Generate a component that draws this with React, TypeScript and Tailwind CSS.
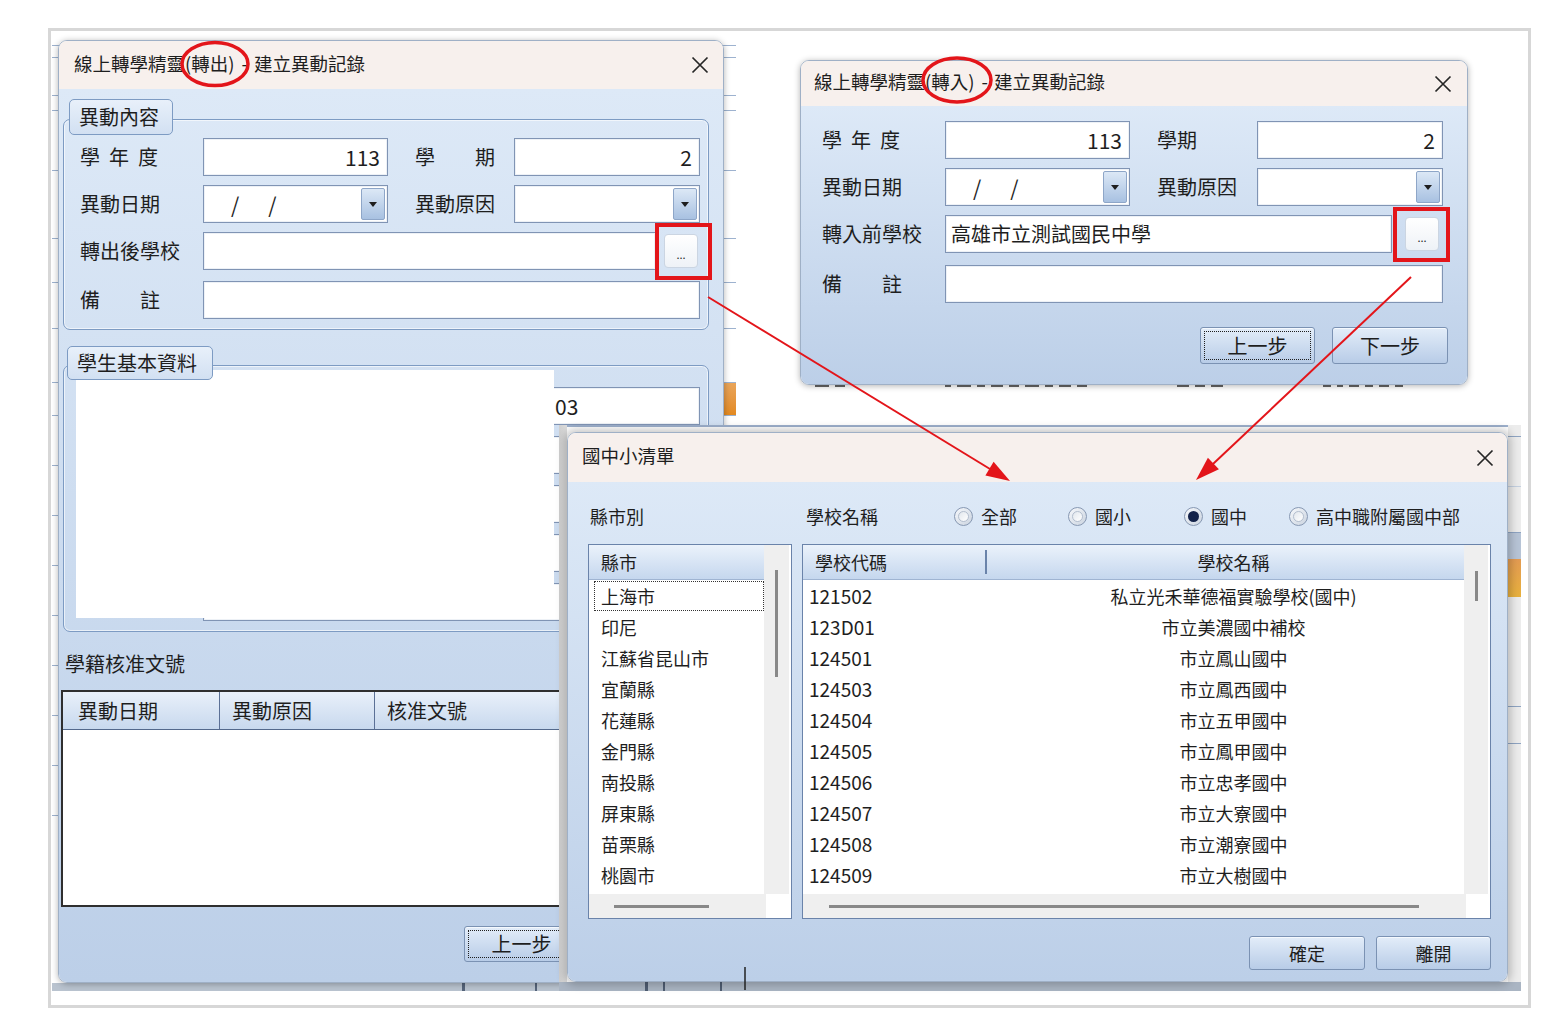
import React from "react";

const cities = ["上海市", "印尼", "江蘇省昆山市", "宜蘭縣", "花蓮縣", "金門縣", "南投縣", "屏東縣", "苗栗縣", "桃園市"];

const schools = [
  ["121502", "私立光禾華德福實驗學校(國中)"],
  ["123D01", "市立美濃國中補校"],
  ["124501", "市立鳳山國中"],
  ["124503", "市立鳳西國中"],
  ["124504", "市立五甲國中"],
  ["124505", "市立鳳甲國中"],
  ["124506", "市立忠孝國中"],
  ["124507", "市立大寮國中"],
  ["124508", "市立潮寮國中"],
  ["124509", "市立大樹國中"],
];

// rows of the app that sits behind the dialogs (only slivers show)
const backRows = [
  { h: 10 }, { h: 12 }, { h: 38 }, { h: 15 }, { h: 60 }, { h: 68 }, { h: 44 }, { h: 46 }, { h: 54 },
  { h: 33, orange: true }, { h: 50 }, { h: 50 }, { h: 50 }, { h: 50 }, { h: 50 }, { h: 50 }, { h: 50 }, { h: 50 },
];

// glyph tops peeking out under the 轉入 dialog: [gap before, width]
const peek = [
  [10, 14], [6, 10], [100, 6], [6, 14], [6, 8], [6, 12], [6, 10], [6, 14], [6, 8], [6, 12], [6, 10],
  [90, 12], [6, 10], [6, 12], [100, 8], [6, 6], [6, 10], [6, 8], [6, 10], [6, 8],
];

function CloseX() {
  return (
    <svg width="20" height="20" viewBox="0 0 20 20" className="shrink-0">
      <path d="M2.5 2.5L17.5 17.5M17.5 2.5L2.5 17.5" stroke="#262626" strokeWidth="1.7" />
    </svg>
  );
}

function Spread({ text, className = "" }: { text: string; className?: string }) {
  return (
    <span className={`flex justify-between ${className}`}>
      {Array.from(text).map((c, i) => (
        <span key={i}>{c}</span>
      ))}
    </span>
  );
}

function Field({ className = "", children }: { className?: string; children?: React.ReactNode }) {
  return (
    <div className={`flex h-full shrink-0 items-center border border-[#8094b4] bg-white shadow-[inset_0_0_0_1px_#edf1f6] ${className}`}>
      {children}
    </div>
  );
}

function DropBtn() {
  return (
    <div className="ml-auto mr-[2px] flex h-[32px] w-[24px] items-center justify-center rounded-[2px] border border-[#8ea6c8] bg-linear-to-b from-[#dce8f6] to-[#a8c1e1]">
      <svg width="8" height="5" viewBox="0 0 8 5">
        <path d="M0 0H8L4 5Z" fill="#1e1e1e" />
      </svg>
    </div>
  );
}

function DateText() {
  return (
    <span className="flex text-[21px] leading-none">
      <span className="ml-[27px]">/</span>
      <span className="ml-[29px]">/</span>
    </span>
  );
}

function DotsBtn({ className = "" }: { className?: string }) {
  return (
    <div className={`flex h-[34px] w-[34px] shrink-0 items-end justify-center rounded-[4px] border border-[#cbd5e2] bg-linear-to-b from-white to-[#eef2f7] pb-[7px] text-[11px] leading-none ${className}`}>
      ...
    </div>
  );
}

function Btn({ label, focus, className = "" }: { label: string; focus?: boolean; className?: string }) {
  return (
    <div className={`relative flex shrink-0 items-center justify-center rounded-[3px] border border-[#7b92b3] bg-linear-to-b from-[#e3edf9] to-[#b8cce7] shadow-[inset_0_1px_0_#f5f9fe] leading-none ${className}`}>
      {focus && <div className="absolute inset-[3px] border border-dotted border-[#1f1f1f]" />}
      <span>{label}</span>
    </div>
  );
}

function Radio({ on }: { on?: boolean }) {
  return (
    <span className="flex h-[19px] w-[19px] shrink-0 items-center justify-center rounded-full border border-[#8798b2] bg-linear-to-br from-[#f6f8fb] to-[#cbd4e0]">
      <span className={`h-[11px] w-[11px] rounded-full ${on ? "bg-[#13224a]" : "border border-[#b3bece] bg-linear-to-br from-[#e2e7ed] to-white"}`} />
    </span>
  );
}

function TitleBar({ children, className }: { children: React.ReactNode; className: string }) {
  return (
    <div className={`flex shrink-0 items-center justify-between bg-[#f7f0ed] ${className}`}>
      <span className="-mt-[4px] flex items-center text-[18.5px] leading-none">{children}</span>
      <CloseX />
    </div>
  );
}

function WizardTitle({ dir }: { dir: string }) {
  return (
    <>
      <span>線上轉學精靈</span>
      <span>({dir})</span>
      <span className="ml-[7px] mr-[6px]">-</span>
      <span>建立異動記錄</span>
    </>
  );
}

function Backdrop({ className, rows }: { className: string; rows: { h: number; orange?: boolean }[] }) {
  return (
    <div className={`absolute flex flex-col overflow-hidden ${className}`}>
      {rows.map((r, i) => (
        <div key={i} className="flex shrink-0 justify-end border-b border-[#9db2cf] bg-white" style={{ height: r.h }}>
          {r.orange && <div className="w-[12px] bg-linear-to-b from-[#e9a55a] to-[#e38a1f]" />}
        </div>
      ))}
      <div className="flex-1 bg-white" />
      <div className="flex h-[8px] shrink-0 gap-[70px] bg-[#b9c3cf] pl-[410px]">
        <div className="w-[3px] bg-[#55647a]" />
        <div className="w-[2px] bg-[#55647a]" />
        <div className="w-[2px] bg-[#55647a]" />
      </div>
    </div>
  );
}

function OutWindow() {
  return (
    <div className="absolute left-[58px] top-[40px] z-10 flex h-[943px] w-[666px] flex-col overflow-hidden rounded-[9px] border border-[#9fb0c6] shadow-[0_1px_6px_rgba(0,0,0,0.3)]">
      <TitleBar className="h-[48px] pl-[15px] pr-[13px]">
        <WizardTitle dir="轉出" />
      </TitleBar>
      <div className="flex flex-1 flex-col bg-linear-to-b from-[#dde9f7] to-[#bccfe8] pl-[2px] pr-[12px] pt-[10px] text-[20px]">
        {/* 異動內容 */}
        <div className="ml-[2px] flex w-[646px] flex-col">
          <div className="relative z-10 ml-[6px] flex h-[36px] w-[104px] items-center rounded-[5px] border border-[#7d9bc3] bg-linear-to-b from-[#e8f0fa] to-[#d2e0f2] pl-[9px] leading-none">
            異動內容
          </div>
          <div className="-mt-[16px] flex flex-col gap-[9px] rounded-[7px] border-[1.5px] border-[#7d9bc3] pb-[10px] pl-[16px] pr-[6px] pt-[18px] shadow-[inset_0_0_0_1px_rgba(255,255,255,0.6)]">
            <div className="flex h-[38px] items-center leading-none">
              <div className="w-[123px] shrink-0"><Spread text="學年度" className="w-[78px]" /></div>
              <Field className="w-[185px] justify-end pr-[7px]"><span className="text-[21px]">113</span></Field>
              <div className="ml-[27px] w-[99px] shrink-0"><Spread text="學期" className="w-[80px]" /></div>
              <Field className="w-[186px] justify-end pr-[7px]"><span className="text-[21px]">2</span></Field>
            </div>
            <div className="flex h-[38px] items-center leading-none">
              <div className="w-[123px] shrink-0">異動日期</div>
              <Field className="w-[185px]"><DateText /><DropBtn /></Field>
              <div className="ml-[27px] w-[99px] shrink-0">異動原因</div>
              <Field className="w-[186px]"><DropBtn /></Field>
            </div>
            <div className="flex h-[38px] items-center leading-none">
              <div className="w-[123px] shrink-0">轉出後學校</div>
              <Field className="w-[453px]" />
              <DotsBtn className="ml-[8px]" />
            </div>
            <div className="mt-[2px] flex h-[38px] items-center leading-none">
              <div className="w-[123px] shrink-0"><Spread text="備註" className="w-[80px]" /></div>
              <Field className="w-[497px]" />
            </div>
          </div>
        </div>

        {/* 學生基本資料 */}
        <div className="ml-[2px] mt-[16px] flex w-[646px] flex-col">
          <div className="relative z-10 ml-[4px] flex h-[34px] w-[146px] items-center rounded-[5px] border border-[#7d9bc3] bg-linear-to-b from-[#e8f0fa] to-[#d2e0f2] pl-[9px] leading-none">
            學生基本資料
          </div>
          <div className="relative -mt-[15px] flex h-[267px] flex-col gap-[11px] rounded-[7px] border-[1.5px] border-[#7d9bc3] pl-[16px] pr-[6px] pt-[21px] shadow-[inset_0_0_0_1px_rgba(255,255,255,0.6)]">
            <div className="flex h-[38px] items-center leading-none">
              <div className="w-[123px] shrink-0" />
              <Field className="w-[185px]" />
              <div className="ml-[27px] w-[99px] shrink-0" />
              <Field className="w-[186px]"><span className="ml-[40px] text-[21px]">03</span></Field>
            </div>
            {[0, 1, 2, 3].map((i) => (
              <div key={i} className="flex h-[38px] items-center">
                <div className="w-[123px] shrink-0" />
                <Field className="w-[497px]" />
              </div>
            ))}
            {/* masked area */}
            <div className="absolute left-[12px] top-[4px] h-[248px] w-[478px] bg-white" />
          </div>
        </div>

        <div className="ml-[4px] mt-[22px] leading-none">學籍核准文號</div>

        <div className="mt-[16px] flex h-[217px] w-[646px] flex-col border-2 border-[#2f2f2f] bg-white">
          <div className="flex h-[38px] shrink-0 border-b border-[#53698c] bg-linear-to-b from-[#e9f0fa] to-[#c8d9ee] leading-none">
            <div className="flex w-[157px] items-center border-r-[1.5px] border-[#5b7096] pl-[15px]">異動日期</div>
            <div className="flex w-[155px] items-center border-r-[1.5px] border-[#5b7096] pl-[12px]">異動原因</div>
            <div className="flex flex-1 items-center pl-[12px]">核准文號</div>
          </div>
        </div>

        <div className="mt-[19px] flex h-[36px] justify-end gap-[17px]">
          <Btn label="上一步" focus className="w-[115px]" />
          <Btn label="下一步" className="w-[115px]" />
        </div>
      </div>
    </div>
  );
}

function InWindow() {
  return (
    <div className="absolute left-[800px] top-[60px] z-20 flex h-[325px] w-[668px] flex-col overflow-hidden rounded-[9px] border border-[#9fb0c6] shadow-[0_1px_6px_rgba(0,0,0,0.3)]">
      <TitleBar className="h-[45px] pl-[13px] pr-[14px]">
        <WizardTitle dir="轉入" />
      </TitleBar>
      <div className="flex flex-1 flex-col gap-[9px] bg-linear-to-b from-[#dde9f7] to-[#bccfe8] pl-[21px] pr-[24px] pt-[15px] text-[20px] leading-none">
        <div className="flex h-[38px] items-center">
          <div className="w-[123px] shrink-0"><Spread text="學年度" className="w-[78px]" /></div>
          <Field className="w-[185px] justify-end pr-[7px]"><span className="text-[21px]">113</span></Field>
          <div className="ml-[27px] w-[100px] shrink-0">學期</div>
          <Field className="w-[186px] justify-end pr-[7px]"><span className="text-[21px]">2</span></Field>
        </div>
        <div className="flex h-[38px] items-center">
          <div className="w-[123px] shrink-0">異動日期</div>
          <Field className="w-[185px]"><DateText /><DropBtn /></Field>
          <div className="ml-[27px] w-[100px] shrink-0">異動原因</div>
          <Field className="w-[186px]"><DropBtn /></Field>
        </div>
        <div className="flex h-[38px] items-center">
          <div className="w-[123px] shrink-0">轉入前學校</div>
          <Field className="w-[447px] pl-[5px]">高雄市立測試國民中學</Field>
          <DotsBtn className="ml-[13px]" />
        </div>
        <div className="mt-[3px] flex h-[38px] items-center">
          <div className="w-[123px] shrink-0"><Spread text="備註" className="w-[80px]" /></div>
          <Field className="w-[498px]" />
        </div>
        <div className="-mr-[5px] mt-[15px] flex h-[37px] justify-end gap-[17px]">
          <Btn label="上一步" focus className="w-[115px]" />
          <Btn label="下一步" className="w-[116px]" />
        </div>
      </div>
    </div>
  );
}

function ListWindow() {
  return (
    <div className="absolute left-[567px] top-[432px] z-30 flex h-[550px] w-[941px] flex-col overflow-hidden rounded-[9px] border border-[#9fb0c6] shadow-[0_0_8px_3px_rgba(0,0,0,0.22)]">
      <TitleBar className="h-[49px] pl-[14px] pr-[12px]">國中小清單</TitleBar>
      <div className="flex flex-1 flex-col bg-linear-to-b from-[#dde9f7] to-[#bccfe8] pl-[20px] pr-[16px] text-[18px] leading-none">
        <div className="flex h-[62px] shrink-0 items-center pt-[6px]">
          <span className="ml-[2px] w-[216px] shrink-0">縣市別</span>
          <span className="w-[148px] shrink-0">學校名稱</span>
          <span className="flex w-[114px] shrink-0 items-center gap-[8px]"><Radio />全部</span>
          <span className="flex w-[116px] shrink-0 items-center gap-[8px]"><Radio />國小</span>
          <span className="flex w-[105px] shrink-0 items-center gap-[8px]"><Radio on />國中</span>
          <span className="flex items-center gap-[8px]"><Radio />高中職附屬國中部</span>
        </div>

        <div className="flex h-[375px] shrink-0 gap-[10px]">
          {/* 縣市 */}
          <div className="flex h-full w-[204px] flex-col border-[1.5px] border-[#6a83aa] bg-white">
            <div className="flex flex-1">
              <div className="flex w-[175px] flex-col">
                <div className="flex h-[35px] items-center border-b border-[#9fb4d2] bg-linear-to-b from-[#ebf2fb] to-[#c5d7ee] pl-[12px]">縣市</div>
                {cities.map((c, i) => (
                  <div key={c} className="flex h-[31px] items-center">
                    {i === 0 ? (
                      <div className="ml-[5px] flex h-[30px] flex-1 items-center border border-dotted border-[#333] pl-[6px]">{c}</div>
                    ) : (
                      <span className="pl-[12px]">{c}</span>
                    )}
                  </div>
                ))}
              </div>
              <div className="flex w-[25px] justify-center bg-[#efefef] pt-[25px]">
                <div className="h-[107px] w-[3px] bg-[#888]" />
              </div>
            </div>
            <div className="flex h-[24px] shrink-0">
              <div className="flex flex-1 items-center bg-[#efefef] pl-[25px]">
                <div className="h-[3px] w-[95px] bg-[#888]" />
              </div>
              <div className="w-[25px] bg-white" />
            </div>
          </div>

          {/* 學校 */}
          <div className="flex h-full w-[689px] flex-col border-[1.5px] border-[#6a83aa] bg-white">
            <div className="flex flex-1">
              <div className="flex w-[661px] flex-col">
                <div className="flex h-[35px] border-b border-[#9fb4d2] bg-linear-to-b from-[#ebf2fb] to-[#c5d7ee]">
                  <div className="flex w-[182px] items-center pl-[12px]">學校代碼</div>
                  <div className="my-[5px] w-[2px] bg-[#6a83aa]" />
                  <div className="flex flex-1 items-center justify-center pl-[16px]">學校名稱</div>
                </div>
                {schools.map(([code, name]) => (
                  <div key={code} className="flex h-[31px] items-center">
                    <span className="w-[184px] pl-[6px] text-[19px]">{code}</span>
                    <span className="flex-1 pl-[16px] text-center">{name}</span>
                  </div>
                ))}
              </div>
              <div className="flex w-[24px] justify-center bg-[#efefef] pt-[26px]">
                <div className="h-[30px] w-[3px] bg-[#888]" />
              </div>
            </div>
            <div className="flex h-[24px] shrink-0">
              <div className="flex flex-1 items-center bg-[#efefef] pl-[26px]">
                <div className="h-[3px] w-[590px] bg-[#888]" />
              </div>
              <div className="w-[24px] bg-white" />
            </div>
          </div>
        </div>

        <div className="mt-[17px] flex h-[34px] justify-end gap-[11px]">
          <Btn label="確定" className="w-[116px]" />
          <Btn label="離開" className="w-[115px]" />
        </div>
      </div>
    </div>
  );
}

export default function App() {
  return (
    <div className="relative h-[1024px] w-[1548px] overflow-hidden bg-white pl-[48px] pt-[28px] font-['Noto_Sans_CJK_TC','Noto_Sans_CJK_JP',sans-serif] text-[#1e1e1e]">
      {/* screenshot frame */}
      <div className="h-[980px] w-[1483px] border-[3px] border-[#d7d7d7]" />

      {/* apps behind the dialogs */}
      <Backdrop className="left-[52px] top-[36px] z-0 h-[955px] w-[684px] bg-white" rows={backRows} />
      <div className="absolute left-[559px] top-[425px] z-[15] flex h-[566px] w-[962px] flex-col bg-white">
        <div className="flex flex-1">
          <div className="w-[8px] bg-linear-to-r from-[#cfcfcf] to-[#dedede]" />
          <div className="flex flex-1 flex-col border-t-2 border-[#9db0cc]" />
          <div className="flex w-[13px] flex-col bg-[#ececec]">
            <div className="h-[12px] border-b border-[#8ea4c2]" />
            <div className="h-[50px] border-b border-[#c4d0e0]" />
            <div className="h-[46px] border-b border-[#8ea4c2]" />
            <div className="h-[26px] bg-[#b7c4d6]" />
            <div className="h-[38px] bg-linear-to-b from-[#e39b52] to-[#e8b13c]" />
            <div className="h-[110px] border-b border-[#8ea4c2]" />
            <div className="h-[37px] border-b border-[#8ea4c2]" />
          </div>
        </div>
        <div className="flex h-[9px] shrink-0 gap-[15px] bg-[#aab5c3] pl-[86px]">
          <div className="w-[3px] bg-[#4f5d72]" />
          <div className="w-[2px] bg-[#4f5d72]" />
          <div className="ml-[40px] w-[2px] bg-[#4f5d72]" />
        </div>
      </div>
      <div className="absolute left-[805px] top-[378px] z-[15] flex h-[12px] w-[663px] items-end overflow-hidden bg-white">
        {peek.map(([gap, w], i) => (
          <div key={i} className="mb-[3px] h-[2px] shrink-0 bg-[#666]" style={{ marginLeft: gap, width: w }} />
        ))}
      </div>

      <OutWindow />
      <InWindow />
      <ListWindow />

      {/* annotations */}
      <svg className="pointer-events-none absolute left-0 top-0 z-50" width="1548" height="1024" viewBox="0 0 1548 1024">
        <g fill="none" stroke="#e3151a">
          <ellipse cx="215" cy="64" rx="33" ry="21.5" strokeWidth="3.5" />
          <ellipse cx="957" cy="80" rx="34" ry="22" strokeWidth="3.5" />
          <rect x="657" y="225" width="53" height="53" strokeWidth="4" />
          <rect x="1395" y="209" width="53" height="51" strokeWidth="4" />
          <line x1="708" y1="297" x2="990" y2="469" strokeWidth="2" />
          <line x1="1411" y1="277" x2="1213" y2="464" strokeWidth="2" />
        </g>
        <polygon points="1010,481 985.4,475.4 993.6,461.8" fill="#e3151a" />
        <polygon points="1196,480 1207.9,457.7 1218.9,469.3" fill="#e3151a" />
        <line x1="745" y1="967" x2="745" y2="990" stroke="#222" strokeWidth="1.5" />
      </svg>
    </div>
  );
}
